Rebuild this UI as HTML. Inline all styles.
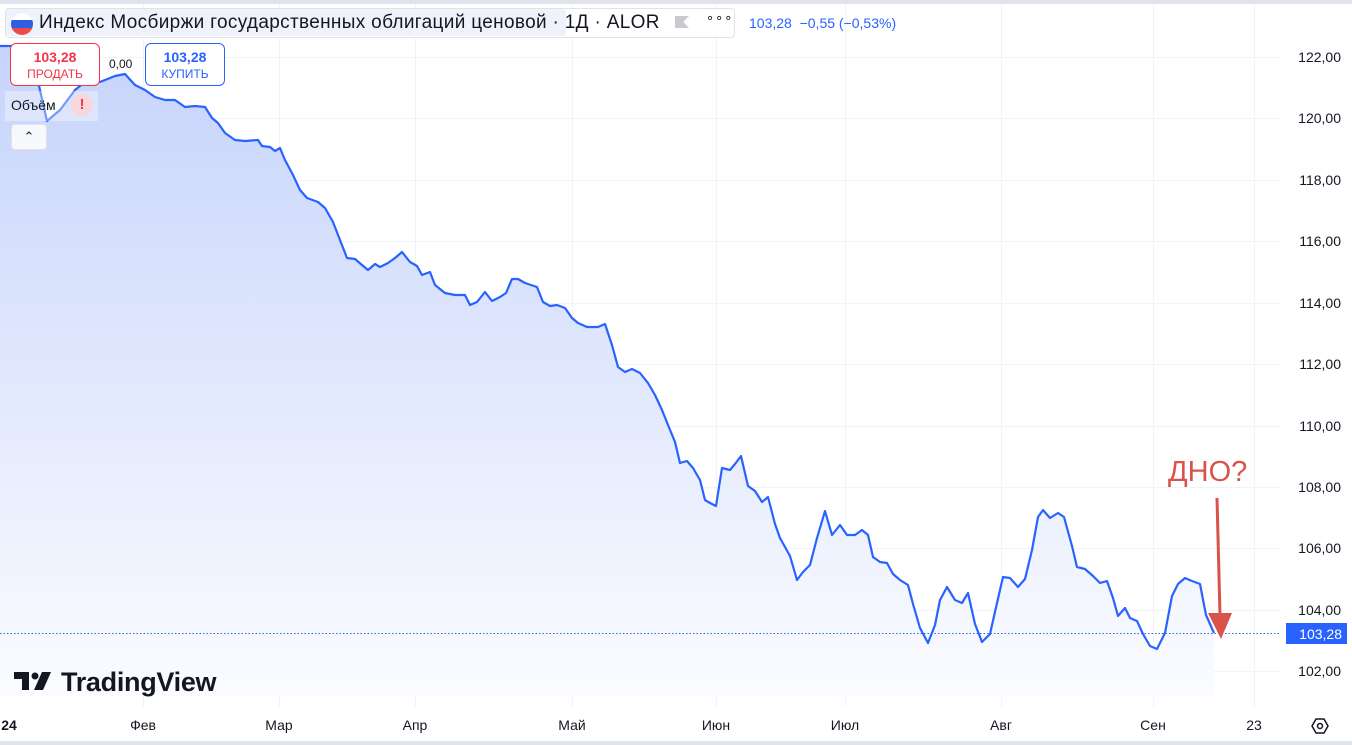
<!DOCTYPE html><html><head><meta charset="utf-8"><style>
body{margin:0;width:1352px;height:745px;overflow:hidden;background:#fff;font-family:"Liberation Sans","DejaVu Sans",sans-serif;position:relative}
.a{position:absolute}
.pl{position:absolute;right:11px;font-size:14px;color:#131722;transform:translateY(-50%)}
.xl{position:absolute;top:717px;font-size:14px;color:#131722;transform:translateX(-50%)}
</style></head><body>
<div class="a" style="left:0;top:0;width:1352px;height:4px;background:#e0e3eb"></div>
<div class="a" style="left:0;top:741px;width:1352px;height:4px;background:#e0e3eb"></div>
<svg class="a" style="left:0;top:0" width="1352" height="745">
<defs><linearGradient id="g" x1="0" y1="0" x2="0" y2="1"><stop offset="0" stop-color="#c6d4fb"/><stop offset="1" stop-color="#fbfcff"/></linearGradient></defs>
<g stroke="#f0f3fa" stroke-width="1">
<line x1="0" x2="1280" y1="57.5" y2="57.5"/><line x1="0" x2="1280" y1="118.5" y2="118.5"/><line x1="0" x2="1280" y1="180.5" y2="180.5"/><line x1="0" x2="1280" y1="241.5" y2="241.5"/><line x1="0" x2="1280" y1="303.5" y2="303.5"/><line x1="0" x2="1280" y1="364.5" y2="364.5"/><line x1="0" x2="1280" y1="426.5" y2="426.5"/><line x1="0" x2="1280" y1="487.5" y2="487.5"/><line x1="0" x2="1280" y1="548.5" y2="548.5"/><line x1="0" x2="1280" y1="610.5" y2="610.5"/><line x1="0" x2="1280" y1="671.5" y2="671.5"/>
<line x1="143.5" x2="143.5" y1="4" y2="707"/><line x1="279.5" x2="279.5" y1="4" y2="707"/><line x1="415.5" x2="415.5" y1="4" y2="707"/><line x1="572.5" x2="572.5" y1="4" y2="707"/><line x1="716.5" x2="716.5" y1="4" y2="707"/><line x1="845.5" x2="845.5" y1="4" y2="707"/><line x1="1001.5" x2="1001.5" y1="4" y2="707"/><line x1="1153.5" x2="1153.5" y1="4" y2="707"/><line x1="1254.5" x2="1254.5" y1="4" y2="707"/>
</g>
<polygon fill="url(#g)" points="0,46 30,46 47,121 60,110 75,90 90,78 100,82 115,76 125,74 135,85 145,90 155,97 165,100 175,100 185,107 195,106 205,107 212,118 218,123 225,133 235,140 245,141 258,140 262,146 270,147 275,151 280,148 285,160 293,175 300,190 307,198 318,202 325,208 333,222 340,240 347,258 355,259 362,265 368,270 375,264 380,267 388,263 395,258 402,252 410,262 417,266 422,275 430,272 435,285 445,293 455,295 465,295 470,305 477,302 485,292 492,301 500,297 506,293 512,279 518,279 525,283 537,287 543,302 550,306 557,305 565,308 572,318 578,323 587,327 598,327 605,324 612,345 618,367 625,372 632,369 640,373 648,383 655,395 662,410 668,425 675,442 680,463 687,461 693,468 700,480 705,500 710,503 716,506 722,468 730,470 735,464 741,456 748,486 755,491 762,502 768,497 775,524 780,538 790,556 797,580 803,572 810,565 817,538 825,511 832,535 840,525 847,535 855,535 862,530 868,535 873,557 880,562 887,563 893,574 900,580 908,585 913,604 920,628 928,643 935,625 940,600 947,587 955,600 962,603 968,593 975,624 982,642 990,634 997,603 1003,577 1010,578 1018,587 1025,579 1032,550 1038,517 1043,510 1050,518 1058,513 1064,517 1072,546 1077,567 1085,569 1093,576 1100,583 1107,581 1113,598 1118,616 1125,608 1130,618 1137,621 1143,634 1150,646 1157,649 1165,633 1172,596 1178,584 1185,578 1192,581 1200,584 1206,615 1214,633 1214,697 0,697"/>
<line x1="0" x2="1280" y1="633.5" y2="633.5" stroke="#2962ff" stroke-width="1" stroke-dasharray="1.5 2"/>
<polyline fill="none" stroke="#2962ff" stroke-width="2.2" stroke-linejoin="round" points="0,46 30,46 47,121 60,110 75,90 90,78 100,82 115,76 125,74 135,85 145,90 155,97 165,100 175,100 185,107 195,106 205,107 212,118 218,123 225,133 235,140 245,141 258,140 262,146 270,147 275,151 280,148 285,160 293,175 300,190 307,198 318,202 325,208 333,222 340,240 347,258 355,259 362,265 368,270 375,264 380,267 388,263 395,258 402,252 410,262 417,266 422,275 430,272 435,285 445,293 455,295 465,295 470,305 477,302 485,292 492,301 500,297 506,293 512,279 518,279 525,283 537,287 543,302 550,306 557,305 565,308 572,318 578,323 587,327 598,327 605,324 612,345 618,367 625,372 632,369 640,373 648,383 655,395 662,410 668,425 675,442 680,463 687,461 693,468 700,480 705,500 710,503 716,506 722,468 730,470 735,464 741,456 748,486 755,491 762,502 768,497 775,524 780,538 790,556 797,580 803,572 810,565 817,538 825,511 832,535 840,525 847,535 855,535 862,530 868,535 873,557 880,562 887,563 893,574 900,580 908,585 913,604 920,628 928,643 935,625 940,600 947,587 955,600 962,603 968,593 975,624 982,642 990,634 997,603 1003,577 1010,578 1018,587 1025,579 1032,550 1038,517 1043,510 1050,518 1058,513 1064,517 1072,546 1077,567 1085,569 1093,576 1100,583 1107,581 1113,598 1118,616 1125,608 1130,618 1137,621 1143,634 1150,646 1157,649 1165,633 1172,596 1178,584 1185,578 1192,581 1200,584 1206,615 1214,633"/>
<line x1="1217" y1="498" x2="1220" y2="615" stroke="#d9534a" stroke-width="3"/>
<polygon points="1208,613 1232,613 1221,639" fill="#d9534a"/>
<text x="1168" y="481" font-size="29" fill="#d9534a" font-family="Liberation Sans,sans-serif">ДНО?</text>
<rect x="1286" y="623" width="61" height="21" fill="#2962ff"/>
<text x="1342" y="639" text-anchor="end" font-size="14" fill="#fff" font-family="Liberation Sans,sans-serif">103,28</text>
<polygon points="1312,726 1316,719 1324,719 1328,726 1324,733 1316,733" fill="none" stroke="#131722" stroke-width="1.5"/>
<circle cx="1320" cy="726" r="2.5" fill="none" stroke="#131722" stroke-width="1.5"/>
</svg>
<div class="pl" style="top:57px">122,00</div><div class="pl" style="top:118px">120,00</div><div class="pl" style="top:180px">118,00</div><div class="pl" style="top:241px">116,00</div><div class="pl" style="top:303px">114,00</div><div class="pl" style="top:364px">112,00</div><div class="pl" style="top:426px">110,00</div><div class="pl" style="top:487px">108,00</div><div class="pl" style="top:548px">106,00</div><div class="pl" style="top:610px">104,00</div><div class="pl" style="top:671px">102,00</div>
<div class="xl" style="left:9px;font-weight:bold">24</div><div class="xl" style="left:143px">Фев</div><div class="xl" style="left:279px">Мар</div><div class="xl" style="left:415px">Апр</div><div class="xl" style="left:572px">Май</div><div class="xl" style="left:716px">Июн</div><div class="xl" style="left:845px">Июл</div><div class="xl" style="left:1001px">Авг</div><div class="xl" style="left:1153px">Сен</div><div class="xl" style="left:1254px">23</div>
<div class="a" style="left:5px;top:8px;width:728px;height:28px;border:1px solid #dfe2ea;border-radius:4px;background:#fff"></div>
<div class="a" style="left:6px;top:9px;width:560px;height:27px;background:#eff2fa;border-radius:4px"></div>
<div class="a" style="left:11px;top:13px;width:22px;height:22px;border-radius:50%;overflow:hidden"><div style="height:7px;background:#fff;border-bottom:0"></div><div style="height:8px;background:#2f5fe0"></div><div style="height:7px;background:#f04a45"></div></div>
<div class="a" style="left:39px;top:12px;font-size:19px;color:#131722;white-space:nowrap;letter-spacing:0.33px">Индекс Мосбиржи государственных облигаций ценовой · 1Д · ALOR</div>
<div class="a" style="left:675px;top:16px;width:14px;height:12px;background:#c8cad0;clip-path:polygon(0 0,100% 0,60% 50%,100% 100%,0 100%)"></div>
<div class="a" style="left:706px;top:10px;font-size:13px;color:#131722;letter-spacing:1px">∘∘∘</div>
<div class="a" style="left:749px;top:15px;font-size:14px;color:#2962ff;white-space:nowrap">103,28 &nbsp;−0,55 (−0,53%)</div>
<div class="a" style="left:10px;top:43px;width:88px;height:41px;border:1px solid #f23645;border-radius:6px;background:#fff;text-align:center;color:#f23645"><div style="font-size:14px;font-weight:bold;margin-top:5px">103,28</div><div style="font-size:12px;margin-top:2px">ПРОДАТЬ</div></div>
<div class="a" style="left:109px;top:57px;font-size:12px;color:#131722">0,00</div>
<div class="a" style="left:145px;top:43px;width:78px;height:41px;border:1px solid #2962ff;border-radius:6px;background:#fff;text-align:center;color:#2962ff"><div style="font-size:14px;font-weight:bold;margin-top:5px">103,28</div><div style="font-size:12px;margin-top:2px">КУПИТЬ</div></div>
<div class="a" style="left:5px;top:91px;width:93px;height:30px;background:rgba(255,255,255,.35)"></div>
<div class="a" style="left:11px;top:97px;font-size:14px;color:#131722">Объём</div>
<div class="a" style="left:71px;top:94px;width:22px;height:22px;border-radius:50%;background:#f5d7dc;color:#f23645;font-weight:bold;font-size:15px;text-align:center;line-height:22px">!</div>
<div class="a" style="left:11px;top:124px;width:34px;height:24px;border:1px solid #e0e3eb;border-radius:4px;background:#f8f9fd;text-align:center;font-size:13px;line-height:24px;color:#131722">⌃</div>
<div class="a" style="left:61px;top:667px;font-size:27px;font-weight:bold;color:#131722;white-space:nowrap;letter-spacing:-0.3px">TradingView</div>
<svg class="a" style="left:14px;top:672px" width="40" height="20"><path d="M0 0H15V18H8V7H0Z" fill="#131722"/><circle cx="21" cy="4" r="3.5" fill="#131722"/><path d="M28 0H37L29 18H20Z" fill="#131722"/></svg>
</body></html>
